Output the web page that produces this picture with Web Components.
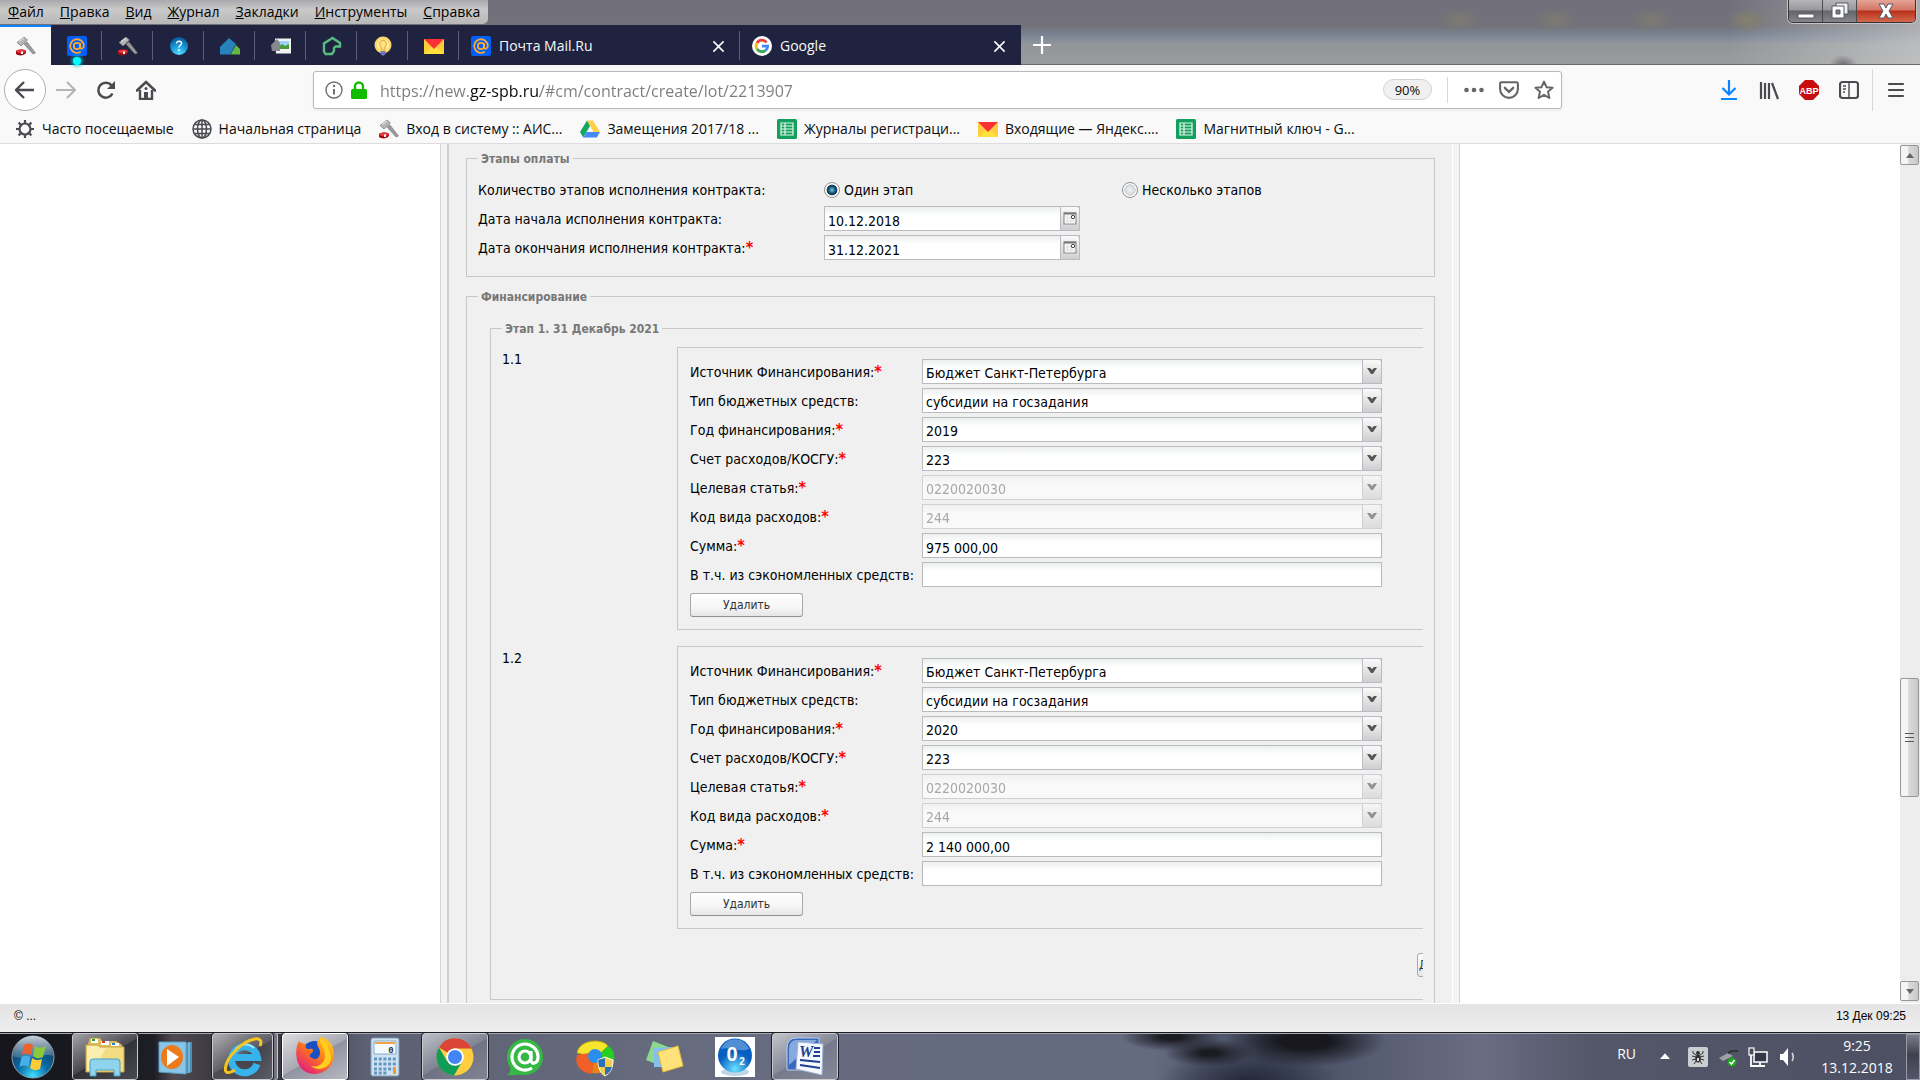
<!DOCTYPE html>
<html lang="ru">
<head>
<meta charset="UTF-8">
<meta name="viewport" content="width=device-width, initial-scale=1">
<title>АИС ГЗ</title>
<style>
    html, body {
        height: 100%;
        margin: 0;
    }

    body {
        --ui-font: "Open Sans", "Noto Sans", sans-serif;
        --form-font: "DejaVu Sans Condensed", "DejaVu Sans", sans-serif;
        --line: #c8c8c8;
        display: flex;
        flex-direction: column;
        overflow: hidden;
        background: #fff;
        color: #0c0c0d;
        font-family: var(--ui-font);
        font-size: 14px;
    }
</style>
</head>
<body>

<window-header>
    <menu-entry slot="menu"><u>Ф</u>айл</menu-entry>
    <menu-entry slot="menu"><u>П</u>равка</menu-entry>
    <menu-entry slot="menu"><u>В</u>ид</menu-entry>
    <menu-entry slot="menu"><u>Ж</u>урнал</menu-entry>
    <menu-entry slot="menu"><u>З</u>акладки</menu-entry>
    <menu-entry slot="menu"><u>И</u>нструменты</menu-entry>
    <menu-entry slot="menu"><u>С</u>правка</menu-entry>
    <browser-tab icon="gavel" pinned active></browser-tab>
    <browser-tab icon="mailru" pinned notify></browser-tab>
    <browser-tab icon="gavel" pinned></browser-tab>
    <browser-tab icon="help" pinned></browser-tab>
    <browser-tab icon="houses" pinned></browser-tab>
    <browser-tab icon="photo" pinned></browser-tab>
    <browser-tab icon="greenhouse" pinned></browser-tab>
    <browser-tab icon="bulb" pinned></browser-tab>
    <browser-tab icon="yamail" pinned></browser-tab>
    <browser-tab icon="mailru">Почта Mail.Ru</browser-tab>
    <browser-tab icon="google">Google</browser-tab>
</window-header>

<nav-bar></nav-bar>

<bookmarks-bar>
    <bookmark-link icon="gear">Часто посещаемые</bookmark-link>
    <bookmark-link icon="globe">Начальная страница</bookmark-link>
    <bookmark-link icon="gavel">Вход в систему :: АИС...</bookmark-link>
    <bookmark-link icon="drive">Замещения 2017/18 ...</bookmark-link>
    <bookmark-link icon="sheets">Журналы регистраци...</bookmark-link>
    <bookmark-link icon="yamail">Входящие — Яндекс....</bookmark-link>
    <bookmark-link icon="sheets">Магнитный ключ - G...</bookmark-link>
</bookmarks-bar>

<page-view>
    <group-box caption="Этапы оплаты">
        <stage-choice></stage-choice>
        <form-field kind="date" label="Дата начала исполнения контракта:" value="10.12.2018"></form-field>
        <form-field kind="date" label="Дата окончания исполнения контракта:" value="31.12.2021" required></form-field>
    </group-box>
    <group-box caption="Финансирование" open>
        <group-box caption="Этап 1. 31 Декабрь 2021" nested>
            <funding-item number="1.1" year="2019" sum="975 000,00"></funding-item>
            <funding-item number="1.2" year="2020" sum="2 140 000,00"></funding-item>
            <add-row></add-row>
        </group-box>
    </group-box>
</page-view>

<status-bar>
    <span>© ...</span>
    <time slot="end">13 Дек 09:25</time>
</status-bar>

<task-bar>
    <task-button icon="explorer" label="Проводник" open></task-button>
    <task-button icon="player" label="Windows Media"></task-button>
    <task-button icon="ie" label="Internet Explorer" open stacked></task-button>
    <task-button icon="firefox" label="Firefox" open active></task-button>
    <task-button icon="calc" label="Калькулятор"></task-button>
    <task-button icon="chrome" label="Chrome" open></task-button>
    <task-button icon="agent" label="Агент"></task-button>
    <task-button icon="wheel" label="Настройка"></task-button>
    <task-button icon="notes" label="Записки"></task-button>
    <task-button icon="oxygen" label="O2"></task-button>
    <task-button icon="word" label="Word" open></task-button>
</task-bar>

<script>
(function (customElements) {
    'use strict';

    // every drawing: [viewBox, markup]
    const ICONS = {
        gavel: ['0 0 20 20', '<path d="M8 8l9 10 2.5-1L11 6z" fill="#999" stroke="#777" stroke-width=".6"/><path d="M1 6.5L8 1l3.5 3L5 10z" fill="#b5b5b5" stroke="#777" stroke-width=".7"/><path d="M3 5.5L8 2" stroke="#eee"/><path d="M0 15c2-2 9-2 10 0v2c-2 3-8 3-10 1z" fill="#a00b12"/><ellipse cx="5" cy="15.3" rx="4.6" ry="1.8" fill="#e5343a"/><path d="M5 15.5h2v2.5H5z" fill="#fff"/>'],
        mailru: ['0 0 20 20', '<rect width="20" height="20" rx="2" fill="#005ff9"/><circle cx="10" cy="10" r="3.2" fill="none" stroke="#ffa930" stroke-width="1.8"/><path d="M13.2 7v4.2c0 2.4 3.6 2 3.6-1.2A6.8 6.8 0 1 0 13.8 15.7" fill="none" stroke="#ffa930" stroke-width="1.8"/>'],
        help: ['0 0 20 20', '<defs><radialGradient id="h" cx=".5" cy=".95" r=".9"><stop stop-color="#5fe0ff"/><stop offset=".5" stop-color="#1c9ede"/><stop offset="1" stop-color="#0a5c9c"/></radialGradient></defs><circle cx="10" cy="10" r="9" fill="url(#h)"/><path d="M7.6 7.5c0-3.2 5-2.8 5-.2 0 2-2.6 2-2.6 4.2" fill="none" stroke="#fff" stroke-width="1.5"/><circle cx="10" cy="14" r="1" fill="#fff"/>'],
        houses: ['0 0 20 20', '<path d="M0 11L9 2l7 6-6 10.500H0z" fill="#2683bb"/><path d="M10.5 18.5L16 9l4 4v5.5z" fill="#62b845"/>'],
        photo: ['0 0 20 20', '<path d="M4 2.5h16v15H5z" fill="#f2f2f2"/><path d="M7 5h11v8H7z" fill="#9ed2f2"/><path d="M7 11l4-3 3 2 4-2v5H7z" fill="#4a9a3c"/><path d="M0 9l6-6 3 4v8H1z" fill="#85888c"/>'],
        greenhouse: ['0 0 20 20', '<path d="M8 18H3.5L2 15.5V7.5L10.5 2 18 7v3.5h-4.500L12 12v3l-2 3z" fill="none" stroke="#58ba80" stroke-width="2.4"/>'],
        bulb: ['0 0 20 20', '<circle cx="10" cy="9" r="8.5" fill="#fcd768"/><circle cx="10" cy="9" r="6" fill="#ffefac"/><path d="M10 4a4 4 0 0 0-2 7v3h4v-3a4 4 0 0 0-2-7z" fill="#ffe27c" stroke="#e8a52e"/><path d="M7.5 15h5v3L10 20l-2.5-2z" fill="#7276bd"/>'],
        yamail: ['0 0 20 20', '<path d="M0 3h20v15H0z" fill="#ffcc3d"/><path d="M0 18L9 10h2l9 8z" fill="#ffe13b"/><path d="M0 3h20L10 13z" fill="#fc3135"/>'],
        google: ['0 0 20 20', '<circle cx="10" cy="10" r="10" fill="#fff"/><g fill="none" stroke-width="2.8"><path d="M14.6 6.4A5.8 5.8 0 0 0 5 7" stroke="#ea4335"/><path d="M5 7a5.8 5.8 0 0 0 0 6" stroke="#fbbc05"/><path d="M5 13a5.8 5.8 0 0 0 8.6 1.4" stroke="#34a853"/><path d="M10 10.2h5.6c0 2-.8 3.4-2 4.2" stroke="#4285f4"/></g>'],
        close: ['0 0 14 14', '<path d="M1.5 1.5l11 11m0-11l-11 11" stroke="#f9f9fa" stroke-width="1.8"/>'],
        plus: ['0 0 18 18', '<path d="M9 0v18M0 9h18" stroke="#fff" stroke-width="2.2"/>'],
        back: ['0 0 20 20', '<path d="M19 10H2m7-8l-8 8 8 8" fill="none" stroke="#4a4a4f" stroke-width="2.4"/>'],
        forward: ['0 0 20 20', '<path d="M0 10h18m-7-8l8 8-8 8" fill="none" stroke="#b5b5b8" stroke-width="2.2"/>'],
        reload: ['0 0 20 20', '<path d="M16.5 13.5A7.5 7.5 0 1 1 15.6 5.4" fill="none" stroke="#4a4a4f" stroke-width="2.5"/><path d="M19 1v8h-8z" fill="#4a4a4f"/>'],
        home: ['0 0 20 20', '<path d="M1 10.5L10 2l9 8.5" fill="none" stroke="#4a4a4f" stroke-width="2.6" stroke-linecap="round"/><path d="M4 10v9h12v-9" fill="none" stroke="#4a4a4f" stroke-width="2.4"/><path d="M8 12h4v7H8z" fill="#4a4a4f"/><circle cx="10" cy="8.5" r="1.5" fill="#4a4a4f"/>'],
        info: ['0 0 18 18', '<circle cx="9" cy="9" r="8" fill="none" stroke="#707073" stroke-width="1.4"/><path d="M9 8v5.5" stroke="#707073" stroke-width="2"/><circle cx="9" cy="5" r="1.2" fill="#707073"/>'],
        lock: ['0 0 16 18', '<rect y="8" width="16" height="10" rx="1.5" fill="#12bc00"/><path d="M4 9V5.5a4 4 0 0 1 8 0V9" fill="none" stroke="#12bc00" stroke-width="2.4"/>'],
        dots: ['0 0 20 20', '<g fill="#66666a"><circle cx="2.5" cy="10" r="2.3"/><circle cx="10" cy="10" r="2.3"/><circle cx="17.5" cy="10" r="2.3"/></g>'],
        pocket: ['0 0 20 20', '<path d="M2.5 2.2h15q1.4 0 1.4 1.4V9a8.9 8.9 0 0 1-17.8 0V3.6q0-1.4 1.4-1.4z" fill="none" stroke="#66666a" stroke-width="2.1"/><path d="M5.8 7.8L10 11.8l4.2-4" fill="none" stroke="#66666a" stroke-width="2.3" stroke-linecap="round"/>'],
        star: ['0 0 20 20', '<path d="M10 1.6l2.5 5.6 6.1.6-4.6 4 1.4 6.2-5.4-3.2L4.6 18 6 11.8l-4.6-4 6.1-.6z" fill="none" stroke="#66666a" stroke-width="2" stroke-linejoin="round"/>'],
        download: ['0 0 20 20', '<path d="M10 0v14M3.5 8l6.5 6.5L16.5 8M2 19h16" fill="none" stroke="#0a84ff" stroke-width="2.2"/>'],
        library: ['0 0 20 20', '<path d="M2 2v17M6 3v16M10 3v16M13 3l6 16" fill="none" stroke="#4a4a4f" stroke-width="2.2"/>'],
        abp: ['0 0 20 20', '<path d="M6 0h8l6 6v8l-6 6H6l-6-6V6z" fill="#c70d0e"/><text x="10" y="13.5" text-anchor="middle" font-family="Liberation Sans, sans-serif" font-weight="bold" font-size="9" fill="#fff">ABP</text>'],
        sidebar: ['0 0 20 20', '<rect x="1" y="2" width="18" height="16" rx="2.5" fill="none" stroke="#4a4a4f" stroke-width="2.2"/><path d="M10 2v16M4 6h3M4 9h3M4 12h2" stroke="#4a4a4f" stroke-width="1.4"/>'],
        burger: ['0 0 18 18', '<path d="M2 3h14M2 9h14M2 15h14" stroke="#4a4a4f" stroke-width="2.2" stroke-linecap="round"/>'],
        gear: ['0 0 20 20', '<circle cx="10" cy="10" r="5.5" fill="none" stroke="#4a4a4f" stroke-width="2.2"/><path d="M10 1v3M10 16v3M1 10h3M16 10h3M3.6 3.6l2.2 2.2M14.2 14.2l2.2 2.2M16.4 3.6l-2.2 2.2M5.8 14.2l-2.2 2.2" stroke="#4a4a4f" stroke-width="2.2"/>'],
        globe: ['0 0 20 20', '<g fill="none" stroke="#4a4a4f" stroke-width="1.5"><circle cx="10" cy="10" r="9"/><ellipse cx="10" cy="10" rx="4.5" ry="9"/><path d="M10 1v18M1 10h18M3 5.5h14M3 14.5h14"/></g>'],
        drive: ['0 0 20 20', '<path d="M7 1.5h6l7 11.5h-6.5z" fill="#ffcf48"/><path d="M7 1.5L0 13l3.2 5.5L10 7z" fill="#11a861"/><path d="M6.5 13H20l-3.2 5.5H3.3z" fill="#4688f4"/>'],
        sheets: ['0 0 20 20', '<rect width="20" height="20" rx="1.5" fill="#12a05c"/><path d="M4 4h12v12H4zM4 7h12M4 10h12M4 13h12M8 4v12" fill="none" stroke="#e8f5ee" stroke-width="1.2"/>'],
        calendar: ['0 0 14 14', '<path d="M1 1h12v11H1z" fill="#f7f7f7" stroke="#8d8d8d" stroke-width="1.2"/><path d="M1 1.5h12" stroke="#777" stroke-width="2"/><path d="M1 6h12M1 9h12M4.5 3v9M8 3v9" stroke="#ddd" stroke-width=".8"/><circle cx="10" cy="5" r="1.7" fill="#fff" stroke="#444"/>'],
        arrow: ['0 0 10 8', '<path d="M0 1h3l2 2 2-2h3L6 7H4z" fill="#555"/>'],
        orb: ['0 0 44 44', '<defs><radialGradient id="o" cx=".5" cy=".95" r=".8"><stop stop-color="#3ee0ff"/><stop offset=".45" stop-color="#0b6ca8"/><stop offset="1" stop-color="#123a5c"/></radialGradient><linearGradient id="g" x2="0" y2="1"><stop stop-color="#fff" stop-opacity=".75"/><stop offset="1" stop-color="#fff" stop-opacity=".15"/></linearGradient></defs><circle cx="22" cy="22" r="21" fill="url(#o)" stroke="#8aa3b5"/><path d="M2 21a20 20 0 0 1 40 0c-10-4-25 6-40 0z" fill="url(#g)"/><path d="M13 10c4-2 6-2 9 0l-2 10c-3-2-6-2-9 0z" fill="#f0602c"/><path d="M24 11c3 2 6 2 11 0l-3 11c-4 2-7 2-10-1z" fill="#8cc83c"/><path d="M10.5 22c3-2 6-2 9 0l-2 10c-3-2-6-2-9 0z" fill="#48aee8"/><path d="M21 23c3 2 6 3 10 1l-2 10c-4 2-7 1-10-1z" fill="#fccb35"/>'],
        explorer: ['0 0 40 40', '<path d="M2 10l3-9h10l2 3h14l5 3 2 3z" fill="#d9b95a"/><path d="M6 2h7v4H6zM16 4h8v4h-8zM26 6h8v3h-8z" fill="#fff"/><path d="M7 3h3" stroke="#2a9c48" stroke-width="2"/><path d="M17 5h3" stroke="#d53a2c" stroke-width="2"/><path d="M27 7h3" stroke="#2e7cc4" stroke-width="2"/><path d="M1 8h12l2 2h24v25H1z" fill="#f4dc83" stroke="#c9a84c"/><path d="M2 9h11l2 2h6L8 34H2z" fill="#faedb0"/><path d="M5 39V25q0-3 3-3h24q3 0 3 3v14h-6v-6H11v6z" fill="#8fd3ec" stroke="#4b9fc4"/>'],
        player: ['0 0 40 40', '<path d="M30 6l7-1v30l-7 2z" fill="#4a91ba"/><path d="M34 5v31" stroke="#a4d7ef"/><path d="M4 5h27v32L4 35z" fill="#89c5e6" stroke="#5aa0c8"/><ellipse cx="17" cy="20" rx="11" ry="12" fill="#ef7a1c"/><path d="M12 12l12 8-12 9z" fill="#fff"/>'],
        ie: ['0 0 40 40', '<path d="M34 27A13 13 0 1 1 34.5 20.5H12" fill="none" stroke="#35b3ea" stroke-width="7"/><path d="M11 16a12 12 0 0 1 20-5" fill="none" stroke="#a2e6ff" stroke-width="2"/><path d="M12 33C-2 42 0 26 13 13 26 0 42-2 37 9" fill="none" stroke="#f6c51e" stroke-width="3"/>'],
        firefox: ['0 0 40 40', '<defs><linearGradient id="f" x1="1" x2=".2" y2="1"><stop stop-color="#ffe226"/><stop offset=".5" stop-color="#ff7b16"/><stop offset="1" stop-color="#e31587"/></linearGradient></defs><circle cx="20" cy="18" r="14" fill="#1c4fc4"/><path d="M4 4c2 2 4 3 7 3-1 4 0 5 3 5 4-1 5 1 3 4-3 1-3 4 0 5 4 3 8-1 8-5 0-7-5-6-2-14 2 4 3 4 4 0l0-2c10 4 15 14 10 26-6 14-28 15-34 0C0 18 1 9 4 4z" fill="url(#f)"/><path d="M25 0c-1 7 5 10 5 18 0 8-6 13-14 11 7 6 18 2 20-6 1-8-4-12-4-17-3-1-5-3-7-6z" fill="#ffcf20"/>'],
        calc: ['0 0 40 40', '<rect x="6" y="1" width="28" height="38" rx="2" fill="#cfe2f2" stroke="#7f9db8"/><path d="M9 4h22v13H9z" fill="#f4faff" stroke="#88aac6"/><path d="M10 6h20" stroke="#f0a445" stroke-width="2"/><text x="26" y="15.5" font-family="Liberation Mono, monospace" font-weight="bold" font-size="9" text-anchor="middle" fill="#234">0</text><path d="M9 22h22M9 27h22M9 32h22M9 36h14" stroke="#6296bf" stroke-width="3" stroke-dasharray="3 1.7"/><path d="M28 30h3v7h-3z" fill="#f09a30"/>'],
        chrome: ['0 0 40 40', '<circle cx="20" cy="20" r="18.5" fill="#ffcd40"/><path d="M20 20L4 10.5A18.5 18.5 0 0 1 36.5 11.5H20z" fill="#db4437"/><path d="M4 10.5A18.5 18.5 0 0 0 19 38.4L27.5 24 12 24z" fill="#0f9d58"/><circle cx="20" cy="20" r="8.8" fill="#fff"/><circle cx="20" cy="20" r="7" fill="#4285f4"/>'],
        agent: ['0 0 40 40', '<path d="M2 38c3-2 4-5 3-8A18 18 0 1 1 20 38c-8-1-12 1-18 0z" fill="#35b944"/><circle cx="20" cy="20" r="6" fill="none" stroke="#fff" stroke-width="3.2"/><path d="M26 14v9c0 5 7 4 7-3A13 13 0 1 0 27 31" fill="none" stroke="#fff" stroke-width="3.2"/>'],
        wheel: ['0 0 40 40', '<path d="M2 16C4 2 28 1 33 9l-8 9c-4-5-9-3-10 1z" fill="#f6e52c" stroke="#b3a015"/><path d="M33 9c6 3 8 12 5 18l-12-3c1-3 0-6-2-7z" fill="#25ce21"/><path d="M2 18l12-2c-1 6 1 9 5 10l-2 11C6 36-1 28 2 18z" fill="#f06026"/><path d="M19 25l7-3 8 8c-3 5-9 7-17 6z" fill="#e88314"/><circle cx="20" cy="19" r="7" fill="#2a8fec"/><path d="M23 23l7-3 8 3c0 9-3 13-8 16-5-3-7-8-7-16z" fill="#f5cf45" stroke="#fff"/><path d="M30 21v9h-6l-1-7zM30 30h7c-1 4-4 7-7 8z" fill="#2b70b9"/>'],
        notes: ['0 0 40 40', '<path d="M8 4l18 7-7 19L1 23z" fill="#8cd88c"/><path d="M9 11l20-1 1 20H9z" fill="#84bff0"/><path d="M13 15l20-6 5 20-20 6z" fill="#ffe27a" stroke="#e3ba3b"/>'],
        oxygen: ['0 0 40 40', '<defs><radialGradient id="x" cx=".5" cy=".9"><stop stop-color="#6be4ff"/><stop offset="1" stop-color="#075fc2"/></radialGradient></defs><path d="M0 0h40v40H0z" fill="#fff"/><ellipse cx="20" cy="35" rx="14" ry="4" fill="#c0d5e8"/><circle cx="20" cy="18.5" r="17" fill="url(#x)"/><path d="M6 12C11-1 29-1 34 12c-8 4-18-3-28 0z" fill="#fff" opacity=".3"/><text x="17" y="24" text-anchor="middle" font-family="Liberation Sans, sans-serif" font-weight="bold" font-size="20" fill="#fff">0</text><text x="27" y="28" text-anchor="middle" font-family="Liberation Sans, sans-serif" font-weight="bold" font-size="10" fill="#fff">2</text>'],
        word: ['0 0 40 40', '<path d="M2 33V11Q2 1 12 1h22v32z" fill="#386abb" stroke="#b8ceef"/><path d="M4 31V12q0-9 8-9h20L4 28z" fill="#86aadb"/><path d="M13 5l25 2-1 31-26-6z" fill="#f5f9ff" stroke="#9fb4d5"/><text x="21" y="20" text-anchor="middle" font-family="Liberation Serif, serif" font-style="italic" font-weight="bold" font-size="16" fill="#1f3f94">W</text><path d="M29 11h6M29 15h6M28 19h7M15 23l20 2M15 28l20 3" stroke="#1f3f94" stroke-width="2"/>'],
        tri: ['0 0 12 8', '<path d="M6 0l6 7H0z" fill="#fff"/>'],
        spider: ['0 0 20 20', '<rect width="20" height="20" rx="2" fill="#c9ced0"/><ellipse cx="10" cy="11.5" rx="2.8" ry="4" fill="#333"/><circle cx="10" cy="6" r="2" fill="#333"/><path d="M8 8L5 6V4M12 8l3-2V4M8 10L4 9M12 10l4-1M8 12l-4 1M12 12l4 1M8 14l-2 3M12 14l2 3" fill="none" stroke="#333"/><path d="M9 11h2v3H9z" fill="#ddd"/>'],
        usb: ['0 0 20 20', '<path d="M1 11l9-5 5 3-10 5z" fill="#9ca0a4"/><path d="M10 6l4-2h6" fill="none" stroke="#333" stroke-width="2"/><circle cx="14" cy="15" r="4.5" fill="#22a722"/><path d="M11.5 15l2 2 3-4" fill="none" stroke="#fff" stroke-width="1.5"/>'],
        network: ['0 0 20 20', '<rect x="6" y="5" width="13" height="10" fill="#343848" stroke="#fff" stroke-width="1.5"/><path d="M12 15v3M7 19h10M3 8v11h4" fill="none" stroke="#fff" stroke-width="1.8"/><rect x="1" y="1" width="5" height="7" fill="#444a5c" stroke="#fff" stroke-width="1.2"/>'],
        speaker: ['0 0 20 20', '<path d="M2 7h3l5-6v18l-5-6H2z" fill="#fff"/><path d="M14 6q2.5 4 0 8" fill="none" stroke="#ddd" stroke-width="1.5"/>']
    };

    // base class: fills an open shadow root with what render() gives back
    class BaseElement extends HTMLElement {
        connectedCallback() {
            if (this.shadowRoot) return;
            this.attachShadow({ mode: 'open' }).innerHTML = this.render();
        }

        attr(name) {
            return this.getAttribute(name) || '';
        }
    }

    class UiIcon extends BaseElement {
        render() {
            const [box, body] = ICONS[this.attr('name')];
            const width = this.attr('width') || 20;
            const height = this.attr('height') || width;
            return `
            <style>
                :host { display: block; flex: none; width: ${width}px; height: ${height}px; }
                svg { display: block; width: 100%; height: 100%; }
            </style>
            <svg viewBox="${box}" aria-hidden="true">${body}</svg>`;
        }
    }

    class WindowHeader extends BaseElement {
        render() {
            return `
            <style>
                :host {
                    display: block;
                    flex: none;
                    position: relative;
                    background:
                        radial-gradient(ellipse 20px 12px at 76% 20px, #7d7b70, transparent 100%),
                        radial-gradient(ellipse 20px 12px at 81% 20px, #7d7b70, transparent 100%),
                        radial-gradient(ellipse 20px 12px at 86% 20px, #7d7b70, transparent 100%),
                        radial-gradient(ellipse 20px 12px at 91% 20px, #84816a, transparent 100%),
                        radial-gradient(ellipse 14px 10px at 96% 100%, #6e6e70, transparent 100%),
                        linear-gradient(90deg, transparent 90%, rgba(215, 215, 215, .6)),
                        linear-gradient(#706f7b 0, #72727a 26px, #7a8595 36px, #929699 44px, #999a9b 64px);
                }
                .menu {
                    display: flex;
                    width: max-content;
                    height: 24px;
                    border-radius: 0 0 5px 0;
                    background: linear-gradient(#a9a9ad, #c9c9c9 40%, #b8b8b8);
                }
                .tabs {
                    display: flex;
                    align-items: center;
                    height: 40px;
                    padding-top: 1px;
                    box-shadow: inset 0 -1px #68696c;
                }
                .strip {
                    display: flex;
                    height: 100%;
                    background: #202340;
                }
                button {
                    border: 0;
                    background: none;
                    padding: 0;
                }
                .new { margin-left: 12px; }
                .controls {
                    position: absolute;
                    top: 0;
                    right: 4px;
                    display: flex;
                    height: 22px;
                    border: 1px solid #36363a;
                    border-top: 0;
                    border-radius: 0 0 5px 5px;
                    overflow: hidden;
                    box-shadow: 0 0 0 1px #c4c4c6;
                }
                .controls button {
                    display: grid;
                    place-items: center;
                    box-sizing: border-box;
                    width: 34px;
                    border-right: 1px solid #4a4a4e;
                    background: linear-gradient(#b5b5b8, #98989c 45%, #64646b 50%, #85858b);
                }
                .controls .close {
                    width: 58px;
                    border-right: 0;
                    background: linear-gradient(#e5a497, #d27564 45%, #b9301c 50%, #d4674b);
                }
            </style>
            <nav class="menu"><slot name="menu"></slot></nav>
            <div class="tabs">
                <div class="strip"><slot></slot></div>
                <button class="new" aria-label="Новая вкладка"><ui-icon name="plus" width="18"></ui-icon></button>
            </div>
            <div class="controls">
                <button aria-label="Свернуть"><svg width="18" height="18"><path d="M1 12h16v4H1z" fill="#fff" stroke="#555a6a"/></svg></button>
                <button aria-label="Окно"><svg width="18" height="18"><path d="M5 1h12v11H5z" fill="#eee" stroke="#555a6a"/><path d="M1 4h12v12H1z" fill="#fff" stroke="#555a6a"/><path d="M5 8h4v4H5z" fill="#777" stroke="#555a6a"/></svg></button>
                <button class="close" aria-label="Закрыть"><svg width="16" height="16"><path d="M1 1h5l2 4 2-4h5l-4 7 4 7h-5l-2-4-2 4H1l4-7z" fill="#fff" stroke="#555a6a"/></svg></button>
            </div>`;
        }
    }

    class MenuEntry extends BaseElement {
        render() {
            return `
            <style>
                :host { display: block; }
                button {
                    height: 24px;
                    padding: 0 8px;
                    border: 0;
                    background: none;
                    color: #000;
                    font: 14px/24px var(--ui-font);
                }
            </style>
            <button><slot></slot></button>`;
        }
    }

    class BrowserTab extends BaseElement {
        render() {
            const pinned = this.hasAttribute('pinned');
            return `
            <style>
                :host {
                    display: flex;
                    align-items: center;
                    box-sizing: border-box;
                    position: relative;
                    width: 281px;
                    height: 40px;
                    padding: 2px 15px 0 12px;
                    background: linear-gradient(#5c5e78, #5c5e78) right 6px / 1px 29px no-repeat;
                    color: #f9f9fa;
                }
                :host(:last-child) { background: none; }
                :host([pinned]) { width: 51px; justify-content: center; padding: 2px 0 0; }
                :host([active]) { width: 51px; padding: 0; background: #f9f9fa; border-top: 2px solid #0a84ff; }
                button {
                    border: 0;
                    padding: 0;
                    background: none;
                    color: inherit;
                    font: 14px/20px var(--ui-font);
                }
                .title { flex: 1; padding-left: 8px; text-align: left; }
                .dot {
                    position: absolute;
                    bottom: 0;
                    width: 8px;
                    height: 8px;
                    border-radius: 50%;
                    background: #00feff;
                    box-shadow: 0 0 3px 2px rgba(0, 200, 215, .6);
                }
            </style>
            ${pinned ? '' : `<ui-icon name="${this.attr('icon')}"></ui-icon>`}
            ${pinned
                ? `<button aria-label="Вкладка"><ui-icon name="${this.attr('icon')}"></ui-icon></button>`
                : '<button class="title"><slot></slot></button><button aria-label="Закрыть вкладку"><ui-icon name="close" width="13"></ui-icon></button>'}
            ${this.hasAttribute('notify') ? '<i class="dot"></i>' : ''}`;
        }
    }

    class NavBar extends BaseElement {
        render() {
            return `
            <style>
                :host {
                    display: flex;
                    align-items: center;
                    flex: none;
                    height: 49px;
                    padding: 0 4px;
                    background: #f9f9fa;
                }
                button {
                    display: grid;
                    place-items: center;
                    flex: none;
                    width: 40px;
                    height: 40px;
                    padding: 0;
                    border: 0;
                    background: none;
                }
                .back {
                    width: 42px;
                    height: 42px;
                    border: 1px solid #b1b1b3;
                    border-radius: 50%;
                    background: #fff;
                }
                .url {
                    display: flex;
                    align-items: center;
                    flex: 1;
                    box-sizing: border-box;
                    height: 38px;
                    margin: 0 147px;
                    padding: 0 0 0 11px;
                    border: 1px solid #b9b9bb;
                    border-radius: 3px;
                    background: #fff;
                    box-shadow: 0 1px 3px rgba(0, 0, 0, .08);
                }
                .url ui-icon + ui-icon { margin: 0 11px 0 8px; }
                /* the domain part of the address is darker than the rest */
                input {
                    flex: 1;
                    min-width: 0;
                    height: 32px;
                    border: 0;
                    padding: 2px 2px 0;
                    outline: 0;
                    color: #7c7c80;
                    font: 16px/30px var(--ui-font);
                    background: linear-gradient(90deg, #7c7c80 92px, #0c0c0d 92px 162px, #7c7c80 162px);
                    -webkit-background-clip: text;
                    background-clip: text;
                    -webkit-text-fill-color: transparent;
                }
                .url .zoom {
                    width: 49px;
                    height: 21px;
                    margin-right: 15px;
                    border: 1px solid #d0d0d2;
                    border-radius: 11px;
                    background: #f0f0f1;
                    color: #0c0c0d;
                    font: 13px/18px var(--ui-font);
                }
                .sep { width: 1px; height: 26px; margin-right: 8px; background: #d7d7db; }
                .url button { width: 35px; }
                .tall { height: 42px; margin: 0 3px; }
            </style>
            <button class="back" aria-label="Назад"><ui-icon name="back"></ui-icon></button>
            <button aria-label="Вперёд"><ui-icon name="forward"></ui-icon></button>
            <button aria-label="Обновить"><ui-icon name="reload"></ui-icon></button>
            <button aria-label="Домой"><ui-icon name="home"></ui-icon></button>
            <div class="url">
                <ui-icon name="info" width="18"></ui-icon>
                <ui-icon name="lock" width="16" height="18"></ui-icon>
                <input aria-label="Адрес" value="https://new.gz-spb.ru/#cm/contract/create/lot/2213907">
                <button class="zoom">90%</button>
                <span class="sep"></span>
                <button aria-label="Действия"><ui-icon name="dots"></ui-icon></button>
                <button aria-label="Pocket"><ui-icon name="pocket"></ui-icon></button>
                <button aria-label="В закладки"><ui-icon name="star"></ui-icon></button>
            </div>
            <button aria-label="Загрузки"><ui-icon name="download"></ui-icon></button>
            <button aria-label="Библиотека"><ui-icon name="library"></ui-icon></button>
            <button aria-label="Adblock Plus"><ui-icon name="abp"></ui-icon></button>
            <button aria-label="Боковая панель"><ui-icon name="sidebar"></ui-icon></button>
            <span class="sep tall"></span>
            <button aria-label="Меню"><ui-icon name="burger" width="18"></ui-icon></button>`;
        }
    }

    class BookmarksBar extends BaseElement {
        render() {
            return `
            <style>
                :host {
                    display: flex;
                    align-items: center;
                    flex: none;
                    gap: 18px;
                    height: 29px;
                    padding: 0 15px;
                    border-bottom: 1px solid #dcdcde;
                    background: #f9f9fa;
                }
            </style>
            <slot></slot>`;
        }
    }

    class BookmarkLink extends BaseElement {
        render() {
            return `
            <style>
                :host { display: block; flex: none; }
                a {
                    display: flex;
                    align-items: center;
                    gap: 7px;
                    color: #0c0c0d;
                    font: 14px/20px var(--ui-font);
                    text-decoration: none;
                }
            </style>
            <a href="#"><ui-icon name="${this.attr('icon')}"></ui-icon><slot></slot></a>`;
        }
    }

    class PageView extends BaseElement {
        render() {
            return `
            <style>
                :host {
                    display: flex;
                    flex: 1;
                    min-height: 0;
                    overflow: hidden;
                }
                .scroll { flex: 1; min-width: 0; overflow: hidden; }
                .panel {
                    box-sizing: border-box;
                    width: 100%;
                    max-width: 1020px;
                    margin: 0 auto;
                    padding: 0 6px;
                    border: solid #d5d5d5;
                    border-width: 0 1px;
                    background: #f3f3f3;
                }
                form {
                    padding: 6px 17px 0;
                    border-left: 2px solid #cfcfcf;
                    border-right: 1px solid #fff;
                    background: #f0f0f0;
                }
            </style>
            <div class="scroll">
                <div class="panel"><form><slot></slot></form></div>
            </div>
            <scroll-track></scroll-track>`;
        }
    }

    class ScrollTrack extends BaseElement {
        render() {
            return `
            <style>
                :host {
                    display: flex;
                    flex-direction: column;
                    flex: none;
                    width: 20px;
                    padding: 1px 0 2px;
                    box-sizing: border-box;
                    background: #ededee;
                }
                button, .thumb {
                    display: grid;
                    place-content: center;
                    flex: none;
                    box-sizing: border-box;
                    width: 19px;
                    height: 20px;
                    padding: 0;
                    border: 1px solid #979797;
                    border-radius: 2px;
                    background: linear-gradient(90deg, #f5f5f5 40%, #dadadc 45%, #c8c8cc);
                }
                .thumb { height: 119px; gap: 3px; }
                .thumb i { width: 9px; height: 1px; background: #555; }
                .above { flex: 513; }
                .below { flex: 184; }
            </style>
            <button aria-label="Вверх"><svg width="8" height="5"><path d="M0 5l4-5 4 5z" fill="#666"/></svg></button>
            <span class="above"></span>
            <div class="thumb"><i></i><i></i><i></i></div>
            <span class="below"></span>
            <button aria-label="Вниз"><svg width="8" height="5"><path d="M0 0l4 5 4-5z" fill="#666"/></svg></button>`;
        }
    }

    class GroupBox extends BaseElement {
        render() {
            return `
            <style>
                :host { display: block; margin-bottom: 11px; }
                fieldset {
                    min-width: 0;
                    margin: 0;
                    padding: 9px 11px 14px;
                    border: 1px solid var(--line);
                }
                legend {
                    height: 16px;
                    padding: 0 3px;
                    color: #777;
                    font: bold 12px/18px var(--form-font);
                }
                :host([open]) fieldset { padding: 16px 11px 40px; }
                :host([nested]) { margin-left: 12px; }
                :host([nested]) fieldset {
                    padding: 11px 0 22px 11px;
                    border-right: 0;
                    overflow: hidden;
                }
            </style>
            <fieldset>
                <legend>${this.attr('caption')}</legend>
                <slot></slot>
            </fieldset>`;
        }
    }

    class StageChoice extends BaseElement {
        render() {
            return `
            <style>
                :host {
                    display: grid;
                    grid-template-columns: 346px 298px 1fr;
                    align-items: center;
                    height: 29px;
                    color: #000;
                    font: 14px/16px var(--form-font);
                }
                label { display: flex; align-items: center; gap: 4px; }
                input {
                    appearance: none;
                    width: 16px;
                    height: 16px;
                    margin: 0;
                    border: 1px solid #8e8f8f;
                    border-radius: 50%;
                    background: radial-gradient(#f4f4f4, #cfd3d8 55%, #fff 60%);
                }
                input:checked { background: radial-gradient(circle at 50% 50%, #6fd0f5 0, #17506f 35%, #12384f 50%, #fff 58%); }
            </style>
            <span>Количество этапов исполнения контракта:</span>
            <label><input type="radio" name="stages" checked>Один этап</label>
            <label><input type="radio" name="stages">Несколько этапов</label>`;
        }
    }

    class FormField extends BaseElement {
        control() {
            const value = this.attr('value');
            const off = this.hasAttribute('disabled') ? 'disabled' : '';
            if (this.attr('kind') === 'select') {
                return `<select id="c" ${off}><option>${value}</option></select>
                        <span class="trigger"><ui-icon name="arrow" width="10" height="8"></ui-icon></span>`;
            }
            const input = `<input id="c" type="text" value="${value}">`;
            if (this.attr('kind') === 'date') {
                return input + '<button class="trigger" type="button" aria-label="Календарь"><ui-icon name="calendar" width="14"></ui-icon></button>';
            }
            return input;
        }

        render() {
            return `
            <style>
                :host {
                    display: grid;
                    grid-template-columns: 232px minmax(0, 460px);
                    align-items: center;
                    height: 29px;
                    color: #000;
                    font: 14px/16px var(--form-font);
                }
                :host([kind="date"]) { grid-template-columns: 346px 256px; }
                label { white-space: nowrap; }
                b { color: #f00; font-size: 16px; }
                .control { display: grid; grid-template-columns: 1fr 20px; }
                input, select {
                    grid-area: 1 / 1 / 2 / 3;
                    appearance: none;
                    box-sizing: border-box;
                    width: 100%;
                    height: 25px;
                    margin: 0;
                    padding: 4px 20px 0 3px;
                    border: 1px solid #b9bbbd;
                    border-radius: 0;
                    outline: 0;
                    background: linear-gradient(#eceff0, #fff 8px);
                    color: #000;
                    font: inherit;
                }
                select { padding-top: 3px; }
                .trigger {
                    grid-area: 1 / 2;
                    z-index: 1;
                    display: grid;
                    justify-content: center;
                    box-sizing: border-box;
                    height: 25px;
                    margin: 0;
                    padding: 7px 0 0;
                    border: 1px solid #b9bbc4;
                    border-top-right-radius: 3px;
                    background: linear-gradient(#fafafa, #cfcfcf);
                    pointer-events: none;
                }
                button.trigger { padding-top: 5px; align-content: start; }
                :host([disabled]) .control { opacity: .6; }
                select:disabled { opacity: 1; color: #777; background: linear-gradient(#f0f2f3, #fff 8px); }
            </style>
            <label for="c">${this.attr('label')}${this.hasAttribute('required') ? '<b>*</b>' : ''}</label>
            <div class="control">${this.control()}</div>`;
        }
    }

    class PushButton extends BaseElement {
        render() {
            return `
            <style>
                :host { display: block; width: 113px; }
                button {
                    box-sizing: border-box;
                    width: 100%;
                    height: 24px;
                    padding: 0;
                    border: 1px solid #a9a9a9;
                    border-bottom-color: #8f8f8f;
                    border-radius: 3px;
                    background: linear-gradient(#fff, #f6f6f6 60%, #e6e6e6);
                    color: #333;
                    font: 12px/20px var(--form-font);
                }
            </style>
            <button type="button"><slot></slot></button>`;
        }
    }

    class FundingItem extends BaseElement {
        render() {
            return `
            <style>
                :host {
                    display: grid;
                    grid-template-columns: 175px 1fr;
                    margin-bottom: 16px;
                    color: #000;
                    font: 14px/16px var(--form-font);
                }
                .number { padding-top: 4px; }
                .box {
                    padding: 9px 0 12px 12px;
                    border: 1px solid var(--line);
                    border-right: 0;
                }
                push-button { margin-top: 4px; }
            </style>
            <div class="number">${this.attr('number')}</div>
            <div class="box">
                <form-field kind="select" label="Источник Финансирования:" value="Бюджет Санкт-Петербурга" required></form-field>
                <form-field kind="select" label="Тип бюджетных средств:" value="субсидии на госзадания"></form-field>
                <form-field kind="select" label="Год финансирования:" value="${this.attr('year')}" required></form-field>
                <form-field kind="select" label="Счет расходов/КОСГУ:" value="223" required></form-field>
                <form-field kind="select" label="Целевая статья:" value="0220020030" required disabled></form-field>
                <form-field kind="select" label="Код вида расходов:" value="244" required disabled></form-field>
                <form-field label="Сумма:" value="${this.attr('sum')}" required></form-field>
                <form-field label="В т.ч. из сэкономленных средств:" value=""></form-field>
                <push-button>Удалить</push-button>
            </div>`;
        }
    }

    class AddRow extends BaseElement {
        render() {
            return `
            <style>
                :host {
                    display: flex;
                    justify-content: flex-end;
                    margin-top: 24px;
                }
                button {
                    flex: none;
                    height: 24px;
                    margin-right: -70px;
                    padding: 0 1px;
                    width: 76px;
                    border: 1px solid #a9a9a9;
                    border-radius: 3px;
                    background: linear-gradient(#fff, #e6e6e6);
                    color: #333;
                    font: 12px/20px var(--form-font);
                    text-align: left;
                }
            </style>
            <button type="button">Добавить</button>`;
        }
    }

    class StatusBar extends BaseElement {
        render() {
            return `
            <style>
                :host {
                    display: flex;
                    justify-content: space-between;
                    flex: none;
                    box-sizing: border-box;
                    height: 29px;
                    padding: 4px 14px;
                    border-top: 1px solid #fff;
                    background: linear-gradient(#e4e4e4, #eee);
                    color: #000;
                    font: 12px/16px "Liberation Sans", Arial, sans-serif;
                }
            </style>
            <slot></slot>
            <slot name="end"></slot>`;
        }
    }

    class TaskBar extends BaseElement {
        render() {
            return `
            <style>
                :host {
                    display: flex;
                    flex: none;
                    box-sizing: border-box;
                    height: 48px;
                    border-top: 1px solid #1b1b22;
                    box-shadow: inset 0 1px #a5a5ad;
                    background:
                        radial-gradient(ellipse 50px 14px at 61% 4px, #1b1b22 0 20%, transparent 100%),
                        radial-gradient(ellipse 45px 14px at 63% 20px, #1b1b22 0 20%, transparent 100%),
                        radial-gradient(ellipse 80px 26px at 68% 8px, #17171d 0 30%, transparent 100%),
                        radial-gradient(ellipse 90px 30px at 65% 100%, #25283a, transparent),
                        linear-gradient(90deg, #15151b 0, #1d1d26 8%, #504a50 9%, #2a2a34 13%, #5c6073 19%, #676b7e 35%, #646a80 60%, #434b60 66%, #6a6d84 77%, #545769 83%, #4d5062);
                    color: #fff;
                }
                button { border: 0; padding: 0; background: none; color: inherit; }
                .start { display: grid; place-items: center; width: 66px; margin-right: 6px; }
                .apps { display: flex; gap: 4px; flex: 1; }
                .tray { display: flex; align-items: center; gap: 10px; font: 14px/22px var(--ui-font); }
                .lang { padding: 0 14px 6px 0; }
                .tray ui-icon[name="tri"] { margin-right: 8px; }
                .clock { width: 98px; text-align: center; }
                .desktop {
                    width: 14px;
                    height: 46px;
                    align-self: flex-end;
                    box-sizing: border-box;
                    border: 1px solid #9a9aa6;
                    background: linear-gradient(#7d7d8a, #40404f 45%, #55566a);
                }
            </style>
            <button class="start" aria-label="Пуск"><ui-icon name="orb" width="44"></ui-icon></button>
            <div class="apps"><slot></slot></div>
            <div class="tray">
                <span class="lang">RU</span>
                <ui-icon name="tri" width="10" height="7"></ui-icon>
                <ui-icon name="spider"></ui-icon>
                <ui-icon name="usb"></ui-icon>
                <ui-icon name="network"></ui-icon>
                <ui-icon name="speaker"></ui-icon>
                <div class="clock">9:25<br>13.12.2018</div>
            </div>
            <button class="desktop" aria-label="Показать рабочий стол"></button>`;
        }
    }

    class TaskButton extends BaseElement {
        render() {
            return `
            <style>
                :host { display: block; width: 66px; }
                button {
                    display: grid;
                    place-items: center;
                    box-sizing: border-box;
                    width: 100%;
                    height: 47px;
                    padding: 0;
                    border: 1px solid transparent;
                    border-radius: 3px;
                    background: none;
                }
                :host([open]) button {
                    border-color: #c8c8ce;
                    outline: 1px solid #1f1f28;
                    outline-offset: 0;
                    background: linear-gradient(150deg, rgba(255, 255, 255, .6), rgba(255, 255, 255, .2) 50%, rgba(255, 255, 255, .1) 51%, rgba(255, 255, 255, .2));
                }
                :host([active]) button {
                    border-color: #fff;
                    background: linear-gradient(150deg, #dcdce0, #a9a9b3 50%, #9292a0 51%, #b9b9c4);
                }
                :host([stacked]) button { width: 61px; box-shadow: 4px 0 0 #74757f, 5px 0 0 #c8c8ce; }
            </style>
            <button aria-label="${this.attr('label')}"><ui-icon name="${this.attr('icon')}" width="40"></ui-icon></button>`;
        }
    }

    customElements.define('ui-icon', UiIcon);
    customElements.define('window-header', WindowHeader);
    customElements.define('menu-entry', MenuEntry);
    customElements.define('browser-tab', BrowserTab);
    customElements.define('nav-bar', NavBar);
    customElements.define('bookmarks-bar', BookmarksBar);
    customElements.define('bookmark-link', BookmarkLink);
    customElements.define('page-view', PageView);
    customElements.define('scroll-track', ScrollTrack);
    customElements.define('group-box', GroupBox);
    customElements.define('stage-choice', StageChoice);
    customElements.define('form-field', FormField);
    customElements.define('push-button', PushButton);
    customElements.define('funding-item', FundingItem);
    customElements.define('add-row', AddRow);
    customElements.define('status-bar', StatusBar);
    customElements.define('task-bar', TaskBar);
    customElements.define('task-button', TaskButton);

})(window.customElements);
</script>
</body>
</html>
